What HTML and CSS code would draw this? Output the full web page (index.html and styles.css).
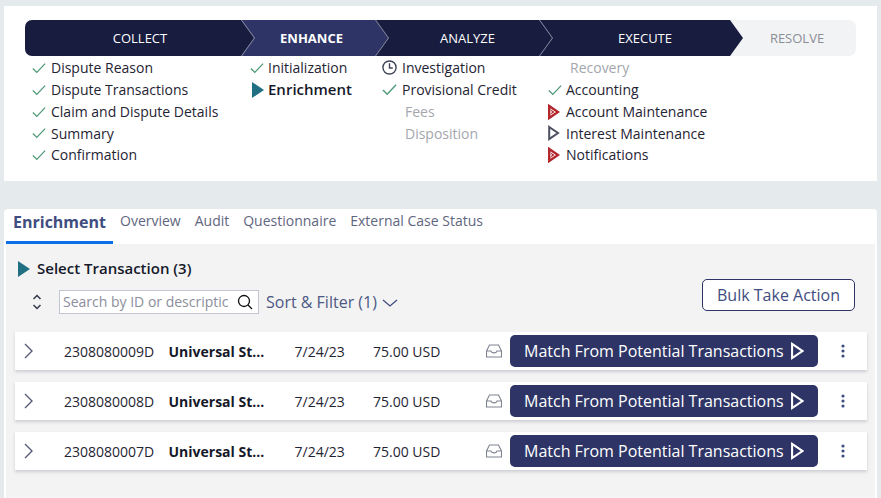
FILE: index.html
```html
<!DOCTYPE html>
<html lang="en">
<head>
<meta charset="utf-8">
<title>Enrichment</title>
<link rel="stylesheet" href="styles.css">
</head>
<body>
<svg class="defs" width="0" height="0" aria-hidden="true">
  <symbol id="check" viewBox="0 0 16 16"><path d="M1 8.500 5.500 13 15 3" fill="none" stroke="#4f9a78" stroke-width="1.500"/></symbol>
  <symbol id="clock" viewBox="0 0 16 16"><circle cx="8" cy="8" r="7" fill="none" stroke="#3f4658" stroke-width="1.500"/><path d="M8 3.500V8.500H11.500" fill="none" stroke="#3f4658" stroke-width="1.500"/></symbol>
  <symbol id="play" viewBox="0 0 12 16"><path d="M0 0 12 8 0 16Z" fill="#216f83"/></symbol>
  <symbol id="red" viewBox="0 0 12 16"><path d="M1.200 2 10 8 1.200 14Z" fill="none" stroke="#b3262c" stroke-width="2.400"/><path d="M2 5 6.500 8 2 11 4 8Z" fill="#b3262c"/></symbol>
  <symbol id="hollow" viewBox="0 0 12 16"><path d="M1.200 2 10 8 1.200 14Z" fill="none" stroke="#4b4f5f" stroke-width="2"/></symbol>
  <symbol id="white-play" viewBox="0 0 12 16"><path d="M1 1.500 10.500 8 1 14.500Z" fill="none" stroke="#fff" stroke-width="1.900"/></symbol>
  <symbol id="chev" viewBox="0 0 9 16"><path d="M1 1 8 8 1 15" fill="none" stroke="#565c78" stroke-width="1.400"/></symbol>
  <symbol id="inbox" viewBox="0 0 16 14"><path d="M3.500 1H12.500L15.500 7V13H.5V7ZM.5 7H5C5.500 9.500 10.500 9.500 11 7H15.500" fill="none" stroke="#7f8390" stroke-width="1.100"/></symbol>
  <symbol id="kebab" viewBox="0 0 4 14"><circle cx="2" cy="2" r="1.600" fill="#3f4d80"/><circle cx="2" cy="7" r="1.600" fill="#3f4d80"/><circle cx="2" cy="12" r="1.600" fill="#3f4d80"/></symbol>
</svg>

<section class="card progress">
  <div class="stepper">
    <div class="seg seg-collect">COLLECT</div>
    <div class="seg seg-enhance">ENHANCE</div>
    <div class="seg seg-analyze">ANALYZE</div>
    <div class="seg seg-execute">EXECUTE</div>
    <div class="seg seg-resolve">RESOLVE</div>
  </div>
  <div class="steps">
    <ul class="col col-1">
      <li><svg class="ico"><use href="#check"/></svg>Dispute Reason</li>
      <li><svg class="ico"><use href="#check"/></svg>Dispute Transactions</li>
      <li><svg class="ico"><use href="#check"/></svg>Claim and Dispute Details</li>
      <li><svg class="ico"><use href="#check"/></svg>Summary</li>
      <li><svg class="ico"><use href="#check"/></svg>Confirmation</li>
    </ul>
    <ul class="col col-2">
      <li><svg class="ico"><use href="#check"/></svg>Initialization</li>
      <li class="current"><svg class="ico tri"><use href="#play"/></svg>Enrichment</li>
    </ul>
    <ul class="col col-3">
      <li><svg class="ico"><use href="#clock"/></svg>Investigation</li>
      <li><svg class="ico"><use href="#check"/></svg>Provisional Credit</li>
      <li class="todo">Fees</li>
      <li class="todo">Disposition</li>
    </ul>
    <ul class="col col-4">
      <li class="todo">Recovery</li>
      <li><svg class="ico"><use href="#check"/></svg>Accounting</li>
      <li><svg class="ico tri"><use href="#red"/></svg>Account Maintenance</li>
      <li><svg class="ico tri"><use href="#hollow"/></svg>Interest Maintenance</li>
      <li><svg class="ico tri"><use href="#red"/></svg>Notifications</li>
    </ul>
  </div>
</section>

<section class="card main">
  <nav class="tabs">
    <a class="tab active">Enrichment</a>
    <a class="tab">Overview</a>
    <a class="tab">Audit</a>
    <a class="tab">Questionnaire</a>
    <a class="tab">External Case Status</a>
  </nav>
  <div class="panel">
    <div class="toolbar">
      <div class="tool-left">
        <h2 class="title"><svg class="title-ico"><use href="#play"/></svg>Select Transaction (3)</h2>
        <div class="filters">
          <svg class="sort" viewBox="0 0 10 18"><path d="M1.500 6 5 2.500 8.500 6M1.500 12 5 15.500 8.500 12" fill="none" stroke="#333a4d" stroke-width="1.500"/></svg>
          <div class="search">
            <span class="placeholder">Search by ID or descriptic</span>
            <svg class="lens" viewBox="0 0 16 16"><circle cx="7" cy="7" r="5.500" fill="none" stroke="#111" stroke-width="1.300"/><path d="M11 11 15 15" stroke="#111" stroke-width="1.300"/></svg>
          </div>
          <span class="sortfilter">Sort &amp; Filter (1)</span>
          <svg class="down" viewBox="0 0 16 8"><path d="M1 1 8 7 15 1" fill="none" stroke="#3f4d80" stroke-width="1.300"/></svg>
        </div>
      </div>
      <button class="bulk">Bulk Take Action</button>
    </div>
    <div class="rows">
      <div class="row">
        <svg class="expand"><use href="#chev"/></svg><span>2308080009D</span><strong>Universal St...</strong><span>7/24/23</span><span>75.00 USD</span>
        <svg class="inbox"><use href="#inbox"/></svg>
        <button class="match">Match From Potential Transactions<svg class="match-ico"><use href="#white-play"/></svg></button>
        <svg class="kebab"><use href="#kebab"/></svg>
      </div>
      <div class="row">
        <svg class="expand"><use href="#chev"/></svg><span>2308080008D</span><strong>Universal St...</strong><span>7/24/23</span><span>75.00 USD</span>
        <svg class="inbox"><use href="#inbox"/></svg>
        <button class="match">Match From Potential Transactions<svg class="match-ico"><use href="#white-play"/></svg></button>
        <svg class="kebab"><use href="#kebab"/></svg>
      </div>
      <div class="row">
        <svg class="expand"><use href="#chev"/></svg><span>2308080007D</span><strong>Universal St...</strong><span>7/24/23</span><span>75.00 USD</span>
        <svg class="inbox"><use href="#inbox"/></svg>
        <button class="match">Match From Potential Transactions<svg class="match-ico"><use href="#white-play"/></svg></button>
        <svg class="kebab"><use href="#kebab"/></svg>
      </div>
    </div>
  </div>
</section>
</body>
</html>
```
FILE: styles.css
```css
* { box-sizing: border-box; }
html, body { height: 100%; }
body {
  margin: 0;
  height: 498px;
  overflow: hidden;
  background: #e5eaed;
  padding: 6px 4px 0;
  font-family: "Open Sans", sans-serif;
  font-size: 14px;
  color: #1f2433;
  display: flex;
  flex-direction: column;
}
.defs { position: absolute; }
.card { background: #fff; }

.progress { height: 175px; padding: 14px 21px 0; flex: none; }

.stepper {
  display: flex;
  width: 831px;
  height: 36px;
  background: #f2f3f5;
  border-radius: 7px;
  overflow: hidden;
  font-size: 13px;
}
.seg {
  position: relative;
  display: flex;
  align-items: center;
  justify-content: center;
  background: #181c3f;
  color: #fff;
}
.seg::after {
  content: "";
  position: absolute;
  z-index: 2;
  top: 0;
  right: -13px;
  width: 13px;
  height: 36px;
  background: inherit;
  clip-path: polygon(0 0, 100% 50%, 0 100%);
}
.seg::before {
  content: "";
  position: absolute;
  z-index: 3;
  top: 0;
  right: -14px;
  width: 14px;
  height: 36px;
  background: #8f93a8;
  clip-path: polygon(0 0, 1px 0, 100% 50%, 1px 100%, 0 100%, 13px 50%);
}
.seg-collect { width: 216px; padding-left: 14px; }
.seg-enhance { width: 134px; padding-left: 7px; background: #2e3566; font-weight: 700; }
.seg-analyze { width: 164px; padding-left: 21px; }
.seg-execute { width: 191px; padding-left: 21px; }
.seg-execute::before { display: none; }
.seg-resolve { width: 126px; padding-left: 8px; background: none; color: #8a8d94; }
.seg-resolve::before, .seg-resolve::after { display: none; }

.steps { display: flex; padding-top: 1px; }
.col { list-style: none; margin: 0; padding: 0; }
.col li { display: flex; align-items: center; line-height: 21.85px; height: 21.85px; white-space: nowrap; }
.col-1 { width: 218px; padding-left: 7px; }
.col-2 { width: 133px; padding-left: 7px; }
.col-3 { width: 166px; padding-left: 6px; }
.col-4 { padding-left: 6px; }
.ico { width: 14px; height: 14px; flex: none; margin-right: 5px; }
.tri { width: 12px; height: 16px; margin-right: 6px; margin-left: 1px; }
.col-2 .ico { margin-right: 4px; }
.col-3 .ico { width: 15px; height: 15px; margin-right: 5px; }
.col-4 .ico { margin-right: 4px; }
.col-4 .tri { margin-right: 6px; margin-left: 0; }
.current { font-size: 15px; font-weight: 600; color: #15192a; }
.todo { color: #a3a6ad; padding-left: 23px; }
.col-4 .todo { padding-left: 22px; }
.col-2 .tri { margin-left: 2px; margin-right: 4px; }

.main {
  margin-top: 28px;
  flex: 1;
  border-radius: 4px 4px 0 0;
  padding: 0 2px;
  display: flex;
  flex-direction: column;
  min-height: 0;
}
.tabs { display: flex; height: 35px; flex: none; }
.tab { padding: 2px 7px 0; color: #5f6680; line-height: 19px; white-space: nowrap; }
.tab.active {
  font-size: 16px;
  font-weight: 700;
  color: #3f4d80;
  height: 35px;
  width: 107px;
  border-bottom: 3px solid #0b6fe8;
  padding: 3px 0 0 7px;
  line-height: 21px;
}
.panel { flex: 1; background: #f3f3f3; padding: 0 8px 0 9px; }

.toolbar { display: flex; justify-content: space-between; height: 88px; padding-top: 15px; }
.tool-left { display: flex; flex-direction: column; }
.title {
  margin: 0;
  display: flex;
  align-items: center;
  font-size: 15px;
  font-weight: 600;
  line-height: 19px;
  color: #15192a;
  padding-left: 3px;
}
.title-ico { width: 12px; height: 16px; margin-right: 7px; }
.filters { display: flex; align-items: center; margin-top: 12px; }
.sort { width: 10px; height: 18px; margin: 0 17px 0 17px; }
.search {
  width: 200px;
  height: 24px;
  background: #fff;
  border: 1px solid #c2c6d2;
  display: flex;
  align-items: center;
  justify-content: space-between;
  padding: 0 5px 0 3px;
}
.placeholder { color: #8b8e9b; white-space: nowrap; overflow: hidden; line-height: 20px; }
.lens { width: 16px; height: 16px; flex: none; }
.sortfilter { font-size: 16px; color: #4d5884; margin-left: 7px; white-space: nowrap; }
.down { width: 16px; height: 8px; margin-left: 5px; margin-top: 2px; }
.bulk {
  align-self: flex-start;
  width: 153px;
  height: 32px;
  margin: 20px 12px 0 0;
  background: #fff;
  border: 1px solid #2e3566;
  border-radius: 5px;
  font: 16px "Open Sans", sans-serif;
  color: #3f4d80;
  padding: 0;
}

.rows { display: flex; flex-direction: column; gap: 12px; }
.row {
  display: grid;
  grid-template-columns: 40px 104.5px 126px 78.500px 113px 24px 308px 1fr;
  align-items: center;
  height: 38px;
  padding-left: 9px;
  background: #fff;
  box-shadow: 0 2px 3px rgba(40, 45, 70, .18);
  white-space: nowrap;
}
.row strong { font-weight: 700; color: #15192a; }
.expand { width: 9px; height: 16px; }
.inbox { width: 16px; height: 14px; }
.match {
  display: flex;
  align-items: center;
  height: 32px;
  padding: 0 0 0 14px;
  background: #2e3566;
  color: #fff;
  border: 0;
  border-radius: 5px;
  font: 16px "Open Sans", sans-serif;
}
.match-ico { width: 13px; height: 18px; margin-left: 7px; }
.kebab { width: 4px; height: 14px; margin-left: 23px; }
```
